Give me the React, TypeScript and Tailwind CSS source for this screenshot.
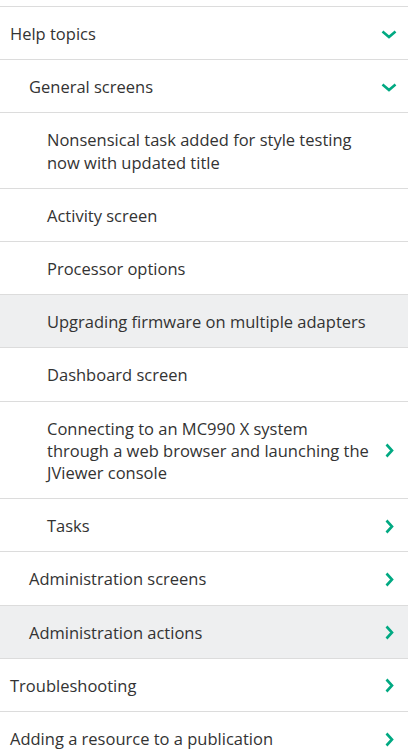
import { ReactNode } from "react";

type Item = {
  label: ReactNode;
  level: 0 | 1 | 2;
  icon?: "down" | "right";
  active?: boolean;
};

const items: Item[] = [
  { label: "Help topics", level: 0, icon: "down" },
  { label: "General screens", level: 1, icon: "down" },
  {
    label: (
      <>
        Nonsensical task added for style testing
        <br />
        now with updated title
      </>
    ),
    level: 2,
  },
  { label: "Activity screen", level: 2 },
  { label: "Processor options", level: 2 },
  { label: "Upgrading firmware on multiple adapters", level: 2, active: true },
  { label: "Dashboard screen", level: 2 },
  {
    label: (
      <>
        Connecting to an MC990 X system
        <br />
        through a web browser and launching the
        <br />
        JViewer console
      </>
    ),
    level: 2,
    icon: "right",
  },
  { label: "Tasks", level: 2, icon: "right" },
  { label: "Administration screens", level: 1, icon: "right" },
  { label: "Administration actions", level: 1, icon: "right", active: true },
  { label: "Troubleshooting", level: 0, icon: "right" },
  { label: "Adding a resource to a publication", level: 0, icon: "right" },
];

const indent = ["pl-[10px]", "pl-[29px]", "pl-[47px]"];

function Chevron({ dir }: { dir: "down" | "right" }) {
  if (dir === "down") {
    return (
      <svg width="16" height="9" viewBox="0 0 16 9" className="shrink-0">
        <path d="M1.5 1.5 L8 7 L14.5 1.5" fill="none" stroke="#01a982" strokeWidth="2.6" />
      </svg>
    );
  }
  return (
    <svg width="9" height="15" viewBox="0 0 9 15" className="mr-[3px] shrink-0">
      <path d="M1.5 1.5 L7 7.5 L1.5 13.5" fill="none" stroke="#01a982" strokeWidth="2.6" />
    </svg>
  );
}

export default function App() {
  return (
    <div className="min-h-screen bg-white">
      <nav className="w-[408px] font-['Open_Sans',sans-serif] text-[16.5px] text-[#333]">
        <div className="h-[7px] border-b border-[#dcdcdc]" />
        {items.map((item, i) => (
          <div
            key={i}
            className={`flex items-center gap-2 border-b border-[#dcdcdc] pt-[16px] pb-[14px] pr-[11px] ${indent[item.level]} ${
              item.active ? "bg-[#eeeff0]" : ""
            }`}
          >
            <span className="min-w-0 flex-1 whitespace-nowrap leading-[22.2px]">{item.label}</span>
            {item.icon && <Chevron dir={item.icon} />}
          </div>
        ))}
      </nav>
    </div>
  );
}
